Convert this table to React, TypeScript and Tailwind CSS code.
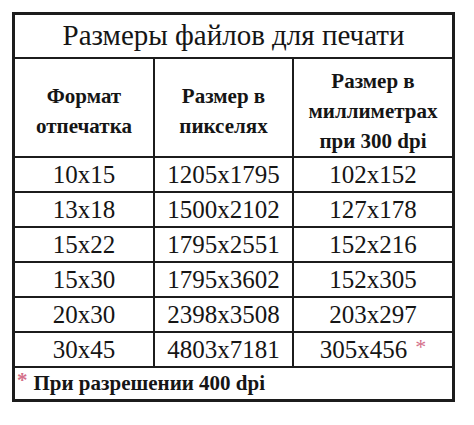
import React from 'react';

const ROWS: [string, string, string][] = [
  ['10x15', '1205x1795', '102x152'],
  ['13x18', '1500x2102', '127x178'],
  ['15x22', '1795x2551', '152x216'],
  ['15x30', '1795x3602', '152x305'],
  ['20x30', '2398x3508', '203x297'],
  ['30x45', '4803x7181', '305x456'],
];

export default function App() {
  return (
    <div className="w-[474px] h-[425px] bg-white text-[#151515] pt-[12px] pl-[12px] font-['Liberation_Serif','Times_New_Roman',serif]">
      <div className="w-[443px] border-[3px] border-[#1c1c1c] bg-white">
        {/* Title */}
        <div className="h-[44px] border-b-2 border-[#1c1c1c] flex items-center justify-center text-[29px] leading-none pb-[2px]">
          Размеры файлов для печати
        </div>

        {/* Header */}
        <div className="grid grid-cols-[140px_139px_1fr] h-[99px] border-b-2 border-[#1c1c1c] font-bold text-[21px] leading-[30px] text-center">
          <div className="border-r-2 border-[#1c1c1c] flex flex-col items-center justify-center pt-[6px]">
            <span>Формат</span>
            <span>отпечатка</span>
          </div>
          <div className="border-r-2 border-[#1c1c1c] flex flex-col items-center justify-center pt-[6px]">
            <span>Размер в</span>
            <span>пикселях</span>
          </div>
          <div className="flex flex-col items-center justify-center pt-[6px]">
            <span>Размер в</span>
            <span>миллиметрах</span>
            <span>при 300 dpi</span>
          </div>
        </div>

        {/* Data rows */}
        {ROWS.map(([a, b, c], i) => (
          <div
            key={a}
            className="grid grid-cols-[140px_139px_1fr] h-[35px] border-b-2 border-[#1c1c1c] text-[25px] leading-none text-center"
          >
            <div className="border-r-2 border-[#1c1c1c] flex items-center justify-center">{a}</div>
            <div className="border-r-2 border-[#1c1c1c] flex items-center justify-center">{b}</div>
            <div className="flex items-center justify-center">
              {c}
              {i === ROWS.length - 1 && <span className="text-[#d4708a] ml-[8px] text-[22px] -mt-[6px]">*</span>}
            </div>
          </div>
        ))}

        {/* Footnote */}
        <div className="h-[31px] flex items-center pl-[2px] font-bold text-[21px] leading-none">
          <span className="text-[#d4708a] mr-[6px] -mt-[6px]">*</span>
          При разрешении 400 dpi
        </div>
      </div>
    </div>
  );
}
